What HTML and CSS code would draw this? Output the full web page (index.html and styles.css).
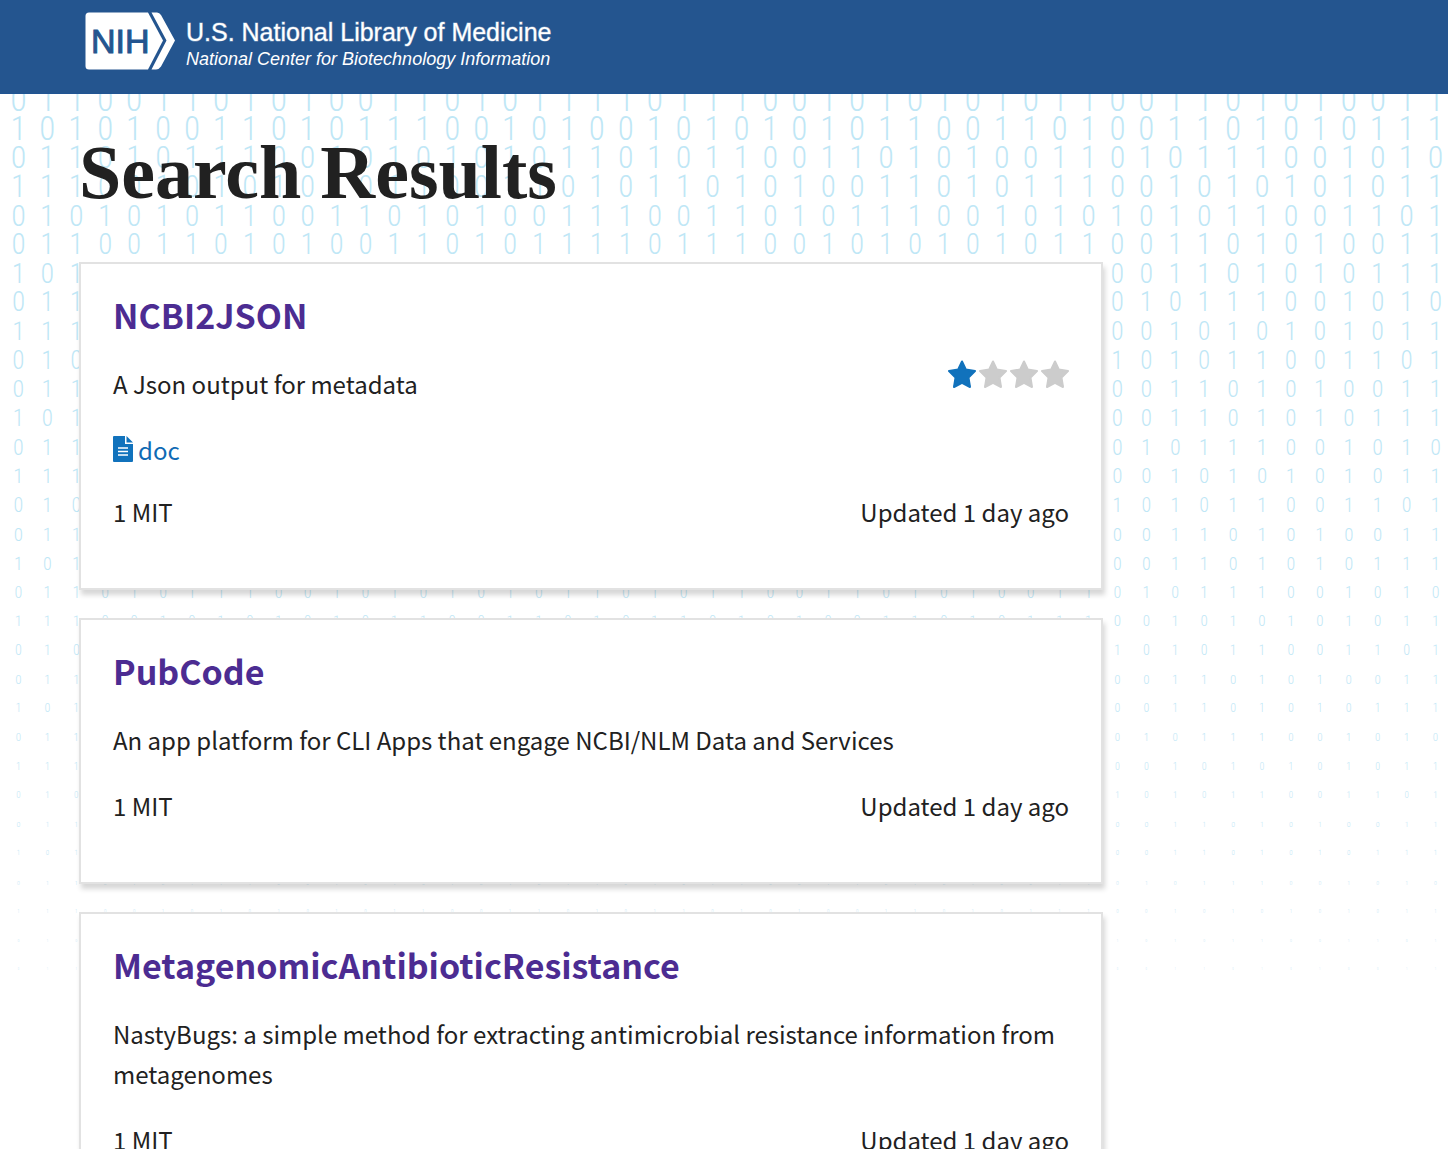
FILE: index.html
```html
<!DOCTYPE html>
<html lang="en">
<head>
<meta charset="utf-8">
<meta name="viewport" content="width=device-width, initial-scale=1">
<title>Search Results</title>
<link rel="stylesheet" href="styles.css">
</head>
<body>
<header class="site-header">
  <a class="brand" href="#">
    <svg class="brand-mark" viewBox="0 0 90 58" width="90" height="58" aria-hidden="true">
      <path fill="#fff" d="M4 .5H63L78 28.500L63 57.500H4Q.5 57.500 .5 54V4Q.5 .5 4 .5Z"/>
      <path fill="#fff" d="M66.500 .5H72Q74.500 .5 76 3L90 28.500L76 54.500Q74 57.500 71 57.500H66.500L81.500 28.500Z"/>
      <text class="brand-letters" x="6" y="41">NIH</text>
    </svg>
    <span class="brand-text">
      <span class="brand-name">U.S. National Library of Medicine</span>
      <span class="brand-sub">National Center for Biotechnology Information</span>
    </span>
  </a>
</header>

<main class="page">
  <div class="binary" id="binary" aria-hidden="true"></div>
  <div class="content">
    <h1 class="page-title">Search Results</h1>

    <article class="card">
      <h2 class="card-title"><a href="#">NCBI2JSON</a></h2>
      <div class="card-body">
        <p class="card-text">A Json output for metadata</p>
        <div class="rating" role="img" aria-label="1 of 4 stars">
          <svg class="star star-on" viewBox="0 0 28 28"><use href="#star"/></svg>
          <svg class="star" viewBox="0 0 28 28"><use href="#star"/></svg>
          <svg class="star" viewBox="0 0 28 28"><use href="#star"/></svg>
          <svg class="star" viewBox="0 0 28 28"><use href="#star"/></svg>
        </div>
      </div>
      <a class="doc-link" href="#">
        <svg class="doc-icon" viewBox="0 0 20 26" width="20" height="26" aria-hidden="true">
          <path fill="#1172bc" d="M1 0H12V8H20V25Q20 26 19 26H1Q0 26 0 25V1Q0 0 1 0Z"/>
          <path fill="#1172bc" d="M13.500 0L20 6.500H13.500Z"/>
          <path stroke="#fff" stroke-width="1.400" d="M5 12H15M5 15.500H15M5 19H15"/>
        </svg>
        <span>doc</span>
      </a>
      <div class="card-meta"><span>1 MIT</span><span>Updated 1 day ago</span></div>
    </article>

    <article class="card">
      <h2 class="card-title"><a href="#">PubCode</a></h2>
      <div class="card-body">
        <p class="card-text">An app platform for CLI Apps that engage NCBI/NLM Data and Services</p>
      </div>
      <div class="card-meta"><span>1 MIT</span><span>Updated 1 day ago</span></div>
    </article>

    <article class="card">
      <h2 class="card-title"><a href="#">MetagenomicAntibioticResistance</a></h2>
      <div class="card-body">
        <p class="card-text">NastyBugs: a simple method for extracting antimicrobial resistance information from metagenomes</p>
      </div>
      <div class="card-meta"><span>1 MIT</span><span>Updated 1 day ago</span></div>
    </article>
  </div>
</main>

<svg class="symbols" aria-hidden="true">
  <symbol id="star" viewBox="0 0 28 28">
    <path stroke="currentColor" stroke-width="2" stroke-linejoin="round" d="M14 1.500L17.800 9.500L27 11L20.500 17.600L22 27L14 22.800L6 27L7.500 17.600L1 11L10.200 9.500Z"/>
  </symbol>
</svg>
<script src="binary.js"></script>
</body>
</html>
```
FILE: styles.css
```css
* {
  box-sizing: border-box;
}

body {
  margin: 0;
  background: #fff;
  color: #212121;
  font-family: "Noto Sans CJK SC", "Open Sans", sans-serif;
  font-size: 24px;
  line-height: 40px;
}

a {
  color: inherit;
  text-decoration: none;
}

.site-header {
  position: relative;
  z-index: 2;
  height: 94px;
  padding: 12px 85px;
  background: #24558f;
  border-bottom: 1px solid #205493;
}

.brand {
  display: inline-flex;
  gap: 11px;
  color: #fff;
  font-family: "Liberation Sans", Arial, sans-serif;
}

.brand-letters {
  fill: #24558f;
  stroke: #24558f;
  stroke-width: 1px;
  font-size: 34px;
}

.brand-text {
  display: flex;
  flex-direction: column;
  padding-top: 6px;
}

.brand-name {
  font-size: 25px;
  line-height: 28px;
  -webkit-text-stroke: 1px rgba(255, 255, 255, 0.4);
}

.brand-sub {
  font-size: 18px;
  font-style: italic;
  line-height: 26px;
}

.page {
  position: relative;
  overflow: hidden;
}

/* Decorative field of binary digits that shrink down the page */
.binary {
  position: absolute;
  top: -9px;
  left: 4px;
  right: -2px;
  color: #bfe7f6;
  font-family: "Roboto Condensed", Roboto, sans-serif;
  font-weight: 300;
  user-select: none;
}

.binary-row {
  display: grid;
  grid-template-columns: repeat(50, 1fr);
  height: 29px;
  line-height: 29px;
  text-align: center;
}

.content {
  position: relative;
  max-width: 1182px;
  padding: 38px 79px 28px;
}

.page-title {
  margin: 0 0 50px;
  font-family: "Liberation Serif", "Times New Roman", serif;
  font-size: 76px;
  font-weight: 700;
  line-height: 80px;
}

.card {
  margin-bottom: 28px;
  padding: 31px 32px 56px;
  background: #fff;
  border: 2px solid #e2e2e2;
  box-shadow: 2px 5px 5px rgba(0, 0, 0, 0.16);
}

.card-title {
  margin: 0 0 29px;
  color: #4c2c92;
  font-size: 34px;
  font-weight: 700;
  line-height: 40px;
}

.card-body {
  display: flex;
  justify-content: space-between;
  margin-bottom: 26px;
}

.card-text {
  margin: 0;
}

.rating {
  display: flex;
  gap: 3px;
  margin-top: -4px;
}

.star {
  width: 28px;
  height: 28px;
  color: #ccc;
  fill: currentColor;
}

.star-on {
  color: #1172bc;
}

.doc-link {
  display: flex;
  gap: 5px;
  margin-bottom: 22px;
  color: #0f6ab4;
}

.doc-icon {
  margin-top: 6px;
}

.card-meta {
  display: flex;
  justify-content: space-between;
}

.symbols {
  position: absolute;
  width: 0;
  height: 0;
}
```
FILE: binary.js
```js
const rows = [
  "01100110101001101011110111001010101011001101010011",
  "10101001101011100101001010101011001101001101010111",
  "01101011100101010101101011001101010011010111001010",
  "11100101010101100110101101010011010111001010101011",
  "01010101100110101001110011010111001010101011001101"
];
const field = document.getElementById("binary");

for (let i = 0; i < 31; i++) {
  const row = document.createElement("div");
  row.className = "binary-row";
  row.style.fontSize = Math.round(34 - i * 1.03) + "px";
  for (const digit of rows[i % rows.length]) {
    const cell = document.createElement("span");
    cell.textContent = digit;
    row.append(cell);
  }
  field.append(row);
}
```
